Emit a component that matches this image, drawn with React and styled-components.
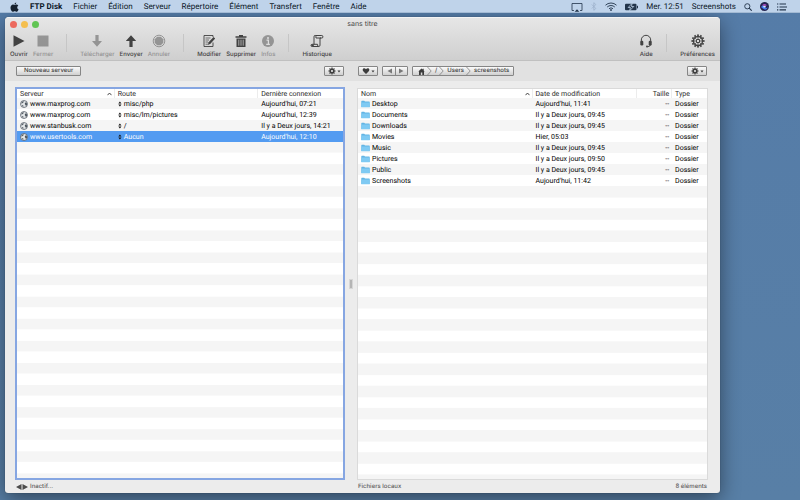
import React from "react";
import styled, { createGlobalStyle } from "styled-components";

const GlobalStyle = createGlobalStyle`
  * {
    box-sizing: border-box;
  }
  body {
    margin: 0;
    font-family: Inter, "Liberation Sans", sans-serif;
    font-size: 7px;
    color: #1c1c1c;
    text-rendering: geometricPrecision;
  }
  button {
    font: inherit;
    color: inherit;
    text-rendering: inherit;
    margin: 0;
    padding: 0;
    border: 0;
    background: none;
  }
  svg {
    display: block;
    flex: none;
  }
`;

const Desktop = styled.div`
  min-height: 100vh;
  display: flex;
  flex-direction: column;
  background: linear-gradient(#557ca8, #587fa6);
`;

const MenuBar = styled.header`
  height: 13px;
  padding: 1px 13px 0 10px;
  display: flex;
  align-items: center;
  justify-content: space-between;
  background: #bfd3ea;
  border-bottom: 1px solid #a3bad4;
  color: #0c1828;
  font-family: Roboto, Inter, sans-serif;
  font-size: 8px;
  line-height: 12px;
  position: relative;
  z-index: 1;
`;

const Menus = styled.nav`
  display: flex;
  align-items: center;
  gap: 11px;
`;

const MenuButton = styled.button`
  font-weight: ${(props) => (props.$app ? 700 : 400)};
  white-space: nowrap;
`;

const StatusItems = styled.div`
  display: flex;
  align-items: center;
  gap: 8px;
`;

const Window = styled.main`
  flex: 1;
  margin: 4px 80px 7px 5px;
  display: flex;
  flex-direction: column;
  background: #ececec;
  border-radius: 4px 4px 3px 3px;
  box-shadow: 0 0 1px rgba(0, 0, 0, 0.5), 0 6px 20px rgba(0, 0, 0, 0.45);
  overflow: hidden;
`;

const TitleArea = styled.div`
  height: 44px;
  background: linear-gradient(#e6e6e6, #cfcfcf);
  border-top: 1px solid #f4f4f4;
  border-bottom: 1px solid #c0c0c0;
`;

const TitleBar = styled.div`
  height: 12px;
  padding: 0 5px;
  display: grid;
  grid-template-columns: 1fr auto 1fr;
  align-items: center;
`;

const Title = styled.h1`
  margin: 0;
  font-size: 7px;
  line-height: 12px;
  font-weight: 400;
  color: #454545;
`;

const Lights = styled.div`
  display: flex;
  gap: 4px;
`;

const Light = styled.button`
  width: 7px;
  height: 7px;
  border-radius: 50%;
  background: ${(props) => props.$color};
`;

const Toolbar = styled.div`
  padding: 4px 5px 0;
  display: flex;
  gap: 5px;
`;

const Tool = styled.button`
  display: flex;
  flex-direction: column;
  align-items: center;
  gap: 3px;
  color: #424242;
  font-size: 6px;
  line-height: 8px;
  font-weight: 500;
  opacity: ${(props) => (props.disabled ? 0.45 : 1)};
`;

const Divider = styled.span`
  width: 1px;
  height: 18px;
  margin: 0 8px;
  background: #c6c6c6;
`;

const Spacer = styled.span`
  flex: 1;
`;

const Split = styled.div`
  display: grid;
  grid-template-columns: minmax(0, 330fr) 12px minmax(0, 351fr);
  padding: 0 12px 0 10px;
`;

const ActionBar = styled(Split)`
  height: 20px;
  align-items: center;
  background: #e1e1e1;
`;

const Actions = styled.div`
  padding: 0 1px;
  display: flex;
  gap: 4px;
  grid-column: ${(props) => props.$column};
`;

const SmallButton = styled.button`
  min-width: 20px;
  height: 10px;
  padding: 0 ${(props) => (props.$wide ? 7 : 2)}px;
  display: flex;
  align-items: center;
  justify-content: center;
  gap: 1px;
  border: 1px solid #868686;
  border-radius: 1px;
  background: linear-gradient(#fbfbfb, #cfcfcf);
  color: #3c3c3c;
  font-size: 6px;
  line-height: 8px;
  font-weight: 500;
`;

const Segments = styled.div`
  height: 10px;
  display: flex;
  border: 1px solid #868686;
  border-radius: 1px;
  background: linear-gradient(#fbfbfb, #cfcfcf);
  color: #3c3c3c;
`;

const Segment = styled.button`
  width: 12px;
  display: flex;
  align-items: center;
  justify-content: center;
  color: #777;

  & + & {
    border-left: 1px solid #868686;
  }
`;

const Crumb = styled.button`
  padding: 0 0 0 3px;
  display: flex;
  align-items: center;
  gap: 2px;
  font-size: 6px;
  line-height: 8px;
  font-weight: 500;

  &:first-child {
    padding-left: 5px;
  }
  &:last-child {
    padding-right: 4px;
  }
`;

const Panes = styled(Split)`
  flex: 1;
  padding-top: 6px;
`;

const Pane = styled.section`
  display: flex;
  flex-direction: column;
  margin-top: ${(props) => (props.$focused ? 0 : 1)}px;
  background: #fff;
  border: ${(props) => (props.$focused ? "2px solid #86a6e2" : "1px solid #dadada")};
`;

const Grip = styled.div`
  width: 4px;
  height: 10px;
  place-self: center;
  border: 1px solid #d6d6d6;
  background: #b5b5b5;
`;

const Table = styled.table`
  width: 100%;
  table-layout: fixed;
  border-spacing: 0;
  font-family: Roboto, Inter, sans-serif;
  line-height: 10px;
`;

const Column = styled.col`
  width: ${(props) => props.$width};
`;

const HeadCell = styled.th`
  height: 9px;
  padding: 1px 3px 0;
  line-height: 8px;
  font-weight: 400;
  text-align: ${(props) => props.$align || "left"};
  color: #2c2c2c;
  white-space: nowrap;
  box-shadow: inset -1px 0 #ececec;

  &:last-child {
    box-shadow: none;
  }
`;

const HeadLabel = styled.div`
  display: flex;
  align-items: center;
  justify-content: space-between;
`;

const Row = styled.tr`
  height: 11px;
  background: ${(props) => (props.$selected ? "#539bf1" : "#fff")};
  color: ${(props) => (props.$selected ? "#fff" : "#000")};

  &:nth-child(odd) {
    background: #f5f5f5;
  }
`;

const Cell = styled.td`
  height: 11px;
  padding: 1px 3px 0;
  text-align: ${(props) => props.$align || "left"};
  white-space: nowrap;
`;

const CellContent = styled.div`
  display: flex;
  align-items: center;
  gap: 2px;
`;

const EmptyRows = styled.div`
  flex: 1;
  background: linear-gradient(#f5f5f5 50%, #fff 50%);
  background-size: 100% calc(200% / ${(props) => props.$rows});
`;

const StatusBar = styled(Split)`
  height: 13px;
  line-height: 12px;
  font-size: 6px;
  font-weight: 500;
  color: #5c5c5c;
`;

const StatusText = styled.div`
  height: 13px;
  padding: 0 1px;
  display: flex;
  align-items: center;
  justify-content: space-between;
  gap: 2px;
  grid-column: ${(props) => props.$column};
`;

const AppleIcon = () => (
  <svg width="9" height="10" viewBox="0 0 18 20" fill="#16212f">
    <path d="M12.500 1c.1 2-1.600 4-3.600 4C8.700 3 10.500 1.200 12.500 1zM9 6c1 0 2-1 3.800-1 1.500 0 3 .8 3.800 2-3.300 2-2.700 6.500.6 7.800C16.300 17 14.700 19.500 13 19.500c-1.400 0-1.900-.9-3.600-.9s-2.300.9-3.600.9C3.500 19.500 1 15.500 1 11.500 1 7.500 3.500 5 6.200 5 7.500 5 8.300 6 9 6z" />
  </svg>
);

const DisplayIcon = () => (
  <svg width="12" height="10" viewBox="0 0 12 10">
    <path d="M3 8.500H1v-7h10v7H9" fill="none" stroke="#22344a" strokeWidth=".8" />
    <path d="M6 7.200l2.300 2.500H3.700z" fill="#22344a" />
  </svg>
);

const BluetoothIcon = () => (
  <svg width="6" height="9" viewBox="0 0 6 9">
    <path d="M.8 2.500l4 4-2 1.800V.7l2 1.800-4 4" fill="none" stroke="#9db3cc" strokeWidth=".8" />
  </svg>
);

const WifiIcon = () => (
  <svg width="12" height="9" viewBox="0 0 12 9" fill="none" stroke="#22344a" strokeWidth=".9">
    <path d="M.5 3.200a8 8 0 0 1 11 0M2.200 5a5.600 5.600 0 0 1 7.600 0M4 6.700a3 3 0 0 1 4 0" />
    <circle cx="6" cy="8" r=".5" fill="#22344a" />
  </svg>
);

const BatteryIcon = () => (
  <svg width="13" height="8" viewBox="0 0 13 8">
    <rect x="0" y=".7" width="11.500" height="6.600" rx="1" fill="#22344a" />
    <rect x="12" y="2.800" width="1" height="2.500" fill="#22344a" />
    <path d="M7.200.2L3.200 4.500h2.300L4.500 7.800 8.800 3.500H6.400z" fill="#22344a" stroke="#bfd3ea" strokeWidth=".8" />
  </svg>
);

const SearchIcon = () => (
  <svg width="8" height="8" viewBox="0 0 8 8" fill="none" stroke="#22344a">
    <circle cx="3.300" cy="3.300" r="2.600" strokeWidth=".9" />
    <path d="M5.200 5.200l2.500 2.500" strokeWidth="1.100" />
  </svg>
);

const SiriIcon = () => (
  <svg width="9" height="9" viewBox="0 0 9 9">
    <circle cx="4.500" cy="4.500" r="4.500" fill="#23224f" />
    <path d="M1 5Q3 2 4.500 4.500T8 5Q6.500 8.200 4.500 7.500T1 5z" fill="#3f78ee" />
    <path d="M2 3.200Q4.500 1 7 3.200Q5.500 3.500 4.500 4.500Q3.500 3.500 2 3.200z" fill="#a24fb8" />
    <ellipse cx="4.500" cy="4.800" rx="1.500" ry=".8" fill="#d9efff" />
  </svg>
);

const ListIcon = () => (
  <svg width="10" height="8" viewBox="0 0 10 8" fill="#22344a">
    <path d="M0 .5h1.300v1.100H0zM2.500.5H9v1.100H2.500zM0 3.400h1.300v1.100H0zM2.500 3.400H10v1.100H2.500zM0 6.300h1.300v1.100H0zM2.500 6.300H9v1.100H2.500z" />
  </svg>
);

const gearTeeth = (count, size, inner, outer, width) =>
  Array.from({ length: count }, (_, i) => (
    <rect
      key={i}
      x={size / 2 - width / 2}
      y={size / 2 - outer}
      width={width}
      height={outer - inner}
      transform={`rotate(${(360 / count) * i} ${size / 2} ${size / 2})`}
    />
  ));

const toolIcons = {
  play: <path d="M1.500 1.200v11.600L12.500 7z" fill="currentColor" />,
  stop: <path d="M1.500 1.500h11v11h-11z" fill="currentColor" />,
  down: <path d="M5.400 1h3.200v6h3.400L7 12.700 2 7h3.400z" fill="currentColor" />,
  up: <path d="M5.400 13h3.200V7h3.600L7 1.200 1.800 7h3.600z" fill="currentColor" />,
  cancel: (
    <>
      <circle cx="7" cy="7" r="5.800" fill="none" stroke="currentColor" strokeWidth="1" />
      <path d="M5.200 2.700h3.600l2.500 2.500v3.600l-2.500 2.500H5.200L2.700 8.800V5.200z" fill="currentColor" />
    </>
  ),
  edit: (
    <>
      <path d="M11 8.500v4H2v-11h9v1.500" fill="none" stroke="currentColor" strokeWidth=".9" />
      <path d="M3.500 4h5M3.500 6h3.500M3.500 8h2.500M3.500 10.200h3" stroke="currentColor" strokeWidth=".7" />
      <path d="M11.500 3l1.700 1.600-5 5.300-2.200.8.6-2.400z" fill="currentColor" />
    </>
  ),
  trash: (
    <>
      <path d="M1.500 2.200H5V1h4v1.200h3.500v1.500h-11z" fill="currentColor" />
      <path d="M2.500 4.500h9V13h-9z" fill="currentColor" />
      <path d="M4.800 5.700v6M7 5.700v6M9.200 5.700v6" stroke="#dadada" strokeWidth=".7" />
    </>
  ),
  info: (
    <>
      <circle cx="7" cy="7" r="6" fill="currentColor" />
      <circle cx="7" cy="4" r="1" fill="#e4e4e4" />
      <path d="M5.500 6.200h1.900v4M5.200 10.400h3.700" fill="none" stroke="#e4e4e4" strokeWidth="1.200" />
    </>
  ),
  history: (
    <>
      <path d="M4 10.300V2.700Q4 1.500 5.200 1.500h6.600q1.100 0 1.100 1.300T11.800 4H10v7.200q0 1.300-1.300 1.300H2.300Q1 12.500 1 11.400t1.300-1.100h5.200q0 2.200 1.200 2.200" fill="none" stroke="currentColor" strokeWidth="1" />
      <path d="M5 1.500Q6.200 2 6 4h5" fill="none" stroke="currentColor" strokeWidth="1" />
      <circle cx="2.600" cy="11.400" r="1.200" fill="currentColor" />
    </>
  ),
  help: (
    <>
      <path d="M2.300 9V6a4.700 4.700 0 0 1 9.400 0v3M11.500 10.500q0 2-3 2.200" fill="none" stroke="currentColor" strokeWidth="1" />
      <rect x="1.300" y="6.700" width="3" height="4.700" rx="1.200" fill="currentColor" />
      <rect x="9.700" y="6.700" width="3" height="4.700" rx="1.200" fill="currentColor" />
      <circle cx="8" cy="12.500" r="1" fill="currentColor" />
    </>
  ),
  settings: (
    <g fill="currentColor">
      {gearTeeth(12, 14, 4.800, 6.600, 1.700)}
      <circle cx="7" cy="7" r="4.500" fill="none" stroke="currentColor" strokeWidth="1.400" />
      <circle cx="7" cy="7" r="1.700" fill="none" stroke="currentColor" strokeWidth="1" />
      <path d="M7 2.500v3M7 8.500v3M2.500 7h3M8.500 7h3M4 4l2 2M10 4L8 6M4 10l2-2M10 10L8 8" stroke="currentColor" strokeWidth=".7" />
    </g>
  ),
};

const GearIcon = () => (
  <svg width="8" height="8" viewBox="0 0 8 8" fill="currentColor">
    {gearTeeth(8, 8, 2, 3.500, 1.200)}
    <circle cx="4" cy="4" r="1.800" fill="none" stroke="currentColor" strokeWidth="1.400" />
  </svg>
);

const HeartIcon = () => (
  <svg width="8" height="8" viewBox="0 0 8 8" fill="currentColor">
    <path d="M4 7L1 4Q0 1.600 2 1.200 3.300 1.100 4 2.300 4.700 1.100 6 1.200 8 1.600 7 4z" />
  </svg>
);

const MoreIcon = () => (
  <svg width="4" height="3" viewBox="0 0 4 3" fill="currentColor">
    <path d="M.5.500h3L2 2.500z" />
  </svg>
);

const ArrowIcon = ({ left }) => (
  <svg width="5" height="6" viewBox="0 0 5 6" fill="currentColor">
    <path d={left ? "M5 .500v5L.500 3z" : "M0 .500v5L4.500 3z"} />
  </svg>
);

const HomeIcon = () => (
  <svg width="7" height="7" viewBox="0 0 7 7" fill="currentColor">
    <path d="M3.500.5l1.200 1V.8h1v1.700l1 .9H6V7H4.300V4.500H2.800V7H1V3.400H.3z" />
  </svg>
);

const ChevronIcon = () => (
  <svg width="5" height="8" viewBox="0 0 5 8" fill="none" stroke="#808080" strokeWidth=".8">
    <path d="M.5 0l3.700 4L.5 8" />
  </svg>
);

const SortIcon = () => (
  <svg width="5" height="4" viewBox="0 0 5 4" fill="none" stroke="#333" strokeWidth=".9">
    <path d="M.5 3.200l2-2.200 2 2.200" />
  </svg>
);

const StepIcon = () => (
  <svg width="4" height="6" viewBox="0 0 4 6" fill="#161616">
    <path d="M.3 2.500h3.200L1.900.5zM.3 3.500h3.200L1.900 5.500z" />
  </svg>
);

const GlobeIcon = () => (
  <svg width="8" height="8" viewBox="0 0 8 8">
    <circle cx="4" cy="4" r="3.500" fill="#e3e6e8" stroke="#49525b" strokeWidth=".7" />
    <path d="M1.500 2.400L3 1.200l.8.4-.4 1-1 .5-.6 1zM5.300 2.600l1.300-.2.500 2L6 6.200 5.500 5l-.8-.9zM2 5l1.200.3.300 1.300-.9-.1z" fill="#49525b" />
  </svg>
);

const FolderIcon = () => (
  <svg width="9" height="8" viewBox="0 0 9 8">
    <path d="M.3 1.200Q.3.700.8.700h2.400l.8.800h4.200q.5 0 .5.500v5H.3z" fill="#63b5e4" />
    <path d="M.3 2.500h8.400v4.700H.3z" fill="#7fcaf3" />
  </svg>
);

const menus = [
  "Fichier",
  "Édition",
  "Serveur",
  "Répertoire",
  "Élément",
  "Transfert",
  "Fenêtre",
  "Aide",
];

const tools = [
  { label: "Ouvrir", icon: "play" },
  { label: "Fermer", icon: "stop", disabled: true },
  { divider: true },
  { label: "Télécharger", icon: "down", disabled: true },
  { label: "Envoyer", icon: "up" },
  { label: "Annuler", icon: "cancel", disabled: true },
  { divider: true },
  { label: "Modifier", icon: "edit" },
  { label: "Supprimer", icon: "trash" },
  { label: "Infos", icon: "info", disabled: true },
  { divider: true },
  { label: "Historique", icon: "history" },
  { spacer: true },
  { label: "Aide", icon: "help" },
  { divider: true },
  { label: "Préférences", icon: "settings" },
];

const servers = [
  { host: "www.maxprog.com", route: "misc/php", date: "Aujourd'hui, 07:21" },
  { host: "www.maxprog.com", route: "misc/lm/pictures", date: "Aujourd'hui, 12:39" },
  { host: "www.stanbusk.com", route: "/", date: "Il y a Deux jours, 14:21" },
  { host: "www.usertools.com", route: "Aucun", date: "Aujourd'hui, 12:10", selected: true },
];

const files = [
  { name: "Desktop", date: "Aujourd'hui, 11:41" },
  { name: "Documents", date: "Il y a Deux jours, 09:45" },
  { name: "Downloads", date: "Il y a Deux jours, 09:45" },
  { name: "Movies", date: "Hier, 05:03" },
  { name: "Music", date: "Il y a Deux jours, 09:45" },
  { name: "Pictures", date: "Il y a Deux jours, 09:50" },
  { name: "Public", date: "Il y a Deux jours, 09:45" },
  { name: "Screenshots", date: "Aujourd'hui, 11:42" },
];

function ToolbarItem({ item }) {
  if (item.divider) return <Divider />;
  if (item.spacer) return <Spacer />;
  return (
    <Tool disabled={item.disabled}>
      <svg width="14" height="14" viewBox="0 0 14 14">
        {toolIcons[item.icon]}
      </svg>
      {item.label}
    </Tool>
  );
}

function ServerTable() {
  return (
    <Table>
      <colgroup>
        <Column $width="30%" />
        <Column $width="44%" />
        <Column $width="26%" />
      </colgroup>
      <thead>
        <tr>
          <HeadCell>
            <HeadLabel>
              Serveur
              <SortIcon />
            </HeadLabel>
          </HeadCell>
          <HeadCell>Route</HeadCell>
          <HeadCell>Dernière connexion</HeadCell>
        </tr>
      </thead>
      <tbody>
        {servers.map((server, i) => (
          <Row key={i} $selected={server.selected}>
            <Cell>
              <CellContent>
                <GlobeIcon />
                {server.host}
              </CellContent>
            </Cell>
            <Cell>
              <CellContent>
                <StepIcon />
                {server.route}
              </CellContent>
            </Cell>
            <Cell>{server.date}</Cell>
          </Row>
        ))}
      </tbody>
    </Table>
  );
}

function FileTable() {
  return (
    <Table>
      <colgroup>
        <Column $width="50%" />
        <Column $width="30%" />
        <Column $width="10%" />
        <Column $width="10%" />
      </colgroup>
      <thead>
        <tr>
          <HeadCell>
            <HeadLabel>
              Nom
              <SortIcon />
            </HeadLabel>
          </HeadCell>
          <HeadCell>Date de modification</HeadCell>
          <HeadCell $align="right">Taille</HeadCell>
          <HeadCell>Type</HeadCell>
        </tr>
      </thead>
      <tbody>
        {files.map((file) => (
          <Row key={file.name}>
            <Cell>
              <CellContent>
                <FolderIcon />
                {file.name}
              </CellContent>
            </Cell>
            <Cell>{file.date}</Cell>
            <Cell $align="right">--</Cell>
            <Cell>Dossier</Cell>
          </Row>
        ))}
      </tbody>
    </Table>
  );
}

function App() {
  return (
    <Desktop>
      <GlobalStyle />
      <MenuBar>
        <Menus>
          <AppleIcon />
          <MenuButton $app>FTP Disk</MenuButton>
          {menus.map((menu) => (
            <MenuButton key={menu}>{menu}</MenuButton>
          ))}
        </Menus>
        <StatusItems>
          <DisplayIcon />
          <BluetoothIcon />
          <WifiIcon />
          <BatteryIcon />
          <span>Mer. 12:51</span>
          <span>Screenshots</span>
          <SearchIcon />
          <SiriIcon />
          <ListIcon />
        </StatusItems>
      </MenuBar>
      <Window>
        <TitleArea>
          <TitleBar>
            <Lights>
              <Light $color="#ec6a5e" aria-label="Fermer la fenêtre" />
              <Light $color="#f4bf4f" aria-label="Réduire" />
              <Light $color="#61c554" aria-label="Agrandir" />
            </Lights>
            <Title>sans titre</Title>
          </TitleBar>
          <Toolbar>
            {tools.map((item, i) => (
              <ToolbarItem key={i} item={item} />
            ))}
          </Toolbar>
        </TitleArea>
        <ActionBar>
          <Actions $column={1}>
            <SmallButton $wide>Nouveau serveur</SmallButton>
            <Spacer />
            <SmallButton aria-label="Actions du serveur">
              <GearIcon />
              <MoreIcon />
            </SmallButton>
          </Actions>
          <Actions $column={3}>
            <SmallButton aria-label="Favoris">
              <HeartIcon />
              <MoreIcon />
            </SmallButton>
            <Segments>
              <Segment aria-label="Précédent">
                <ArrowIcon left />
              </Segment>
              <Segment aria-label="Suivant">
                <ArrowIcon />
              </Segment>
            </Segments>
            <Segments>
              <Crumb aria-label="Départ">
                <HomeIcon />
                <ChevronIcon />
              </Crumb>
              <Crumb>
                /<ChevronIcon />
              </Crumb>
              <Crumb>
                Users
                <ChevronIcon />
              </Crumb>
              <Crumb>screenshots</Crumb>
            </Segments>
            <Spacer />
            <SmallButton aria-label="Actions des fichiers">
              <GearIcon />
              <MoreIcon />
            </SmallButton>
          </Actions>
        </ActionBar>
        <Panes>
          <Pane $focused>
            <ServerTable />
            <EmptyRows $rows={30.4} />
          </Pane>
          <Grip />
          <Pane>
            <FileTable />
            <EmptyRows $rows={26.4} />
          </Pane>
        </Panes>
        <StatusBar>
          <StatusText $column={1}>
            <svg width="12" height="6" viewBox="0 0 12 6" fill="#4c4c4c">
              <path d="M5.500 0v6L0 3zM6.500 0v6L12 3z" />
            </svg>
            <span>Inactif...</span>
            <Spacer />
          </StatusText>
          <StatusText $column={3}>
            <span>Fichiers locaux</span>
            <span>8 éléments</span>
          </StatusText>
        </StatusBar>
      </Window>
    </Desktop>
  );
}

export default App;
